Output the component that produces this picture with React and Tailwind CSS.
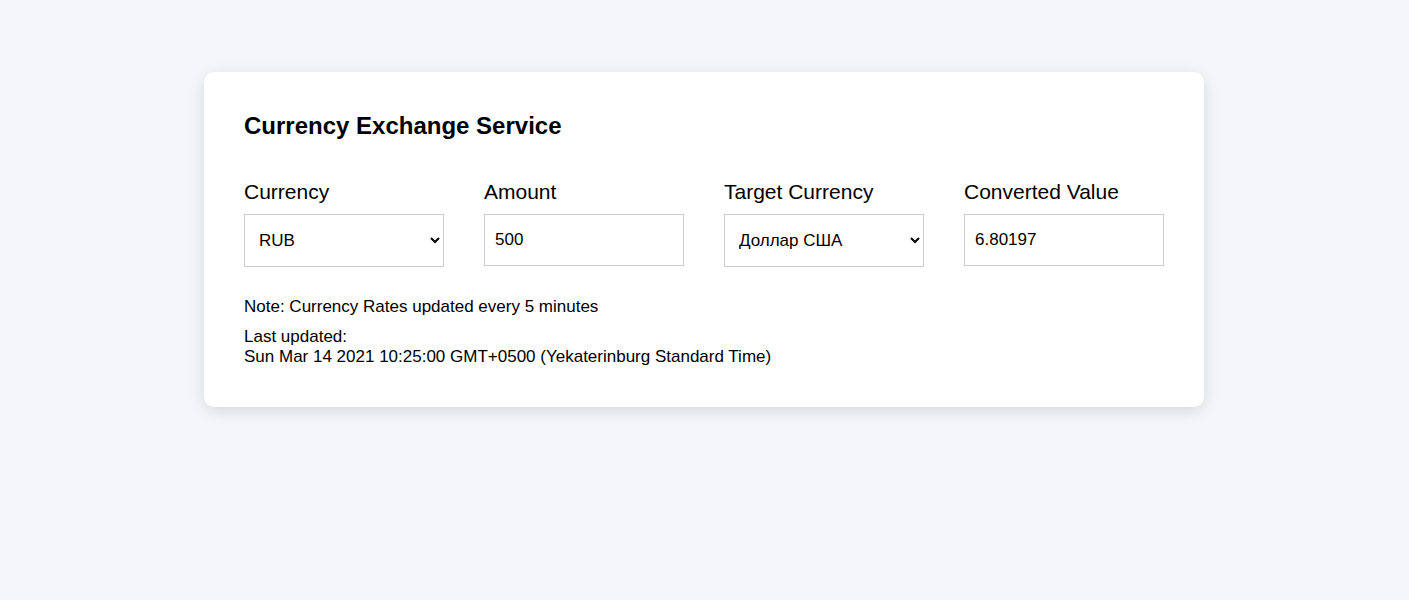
import React from "react";

export default function App() {
  const ff = { fontFamily: '"Liberation Sans", Arial, sans-serif' };
  return (
    <div className="min-h-[600px] w-full bg-[#f5f6fa] pt-[72px] pr-px" style={ff}>
      <div className="mx-auto w-[1000px] rounded-[10px] bg-white p-[40px] shadow-[0_4px_16px_rgba(0,0,0,0.12)] text-black">
        <h1 className="text-[24px] font-bold leading-[28px]">Currency Exchange Service</h1>
        <div className="mt-[40px] grid grid-cols-4 gap-[40px]">
          <div className="flex flex-col">
            <label className="text-[21px] leading-[24px] mb-[10px]">Currency</label>
            <select defaultValue="RUB" className="h-[53px] w-[200px] border border-[#cccccc] bg-white px-[10px] text-[17px] text-black outline-none" style={ff}>
              <option value="RUB">RUB</option>
              <option value="USD">USD</option>
            </select>
          </div>
          <div className="flex flex-col">
            <label className="text-[21px] leading-[24px] mb-[10px]">Amount</label>
            <input defaultValue="500" className="h-[52px] w-[200px] border border-[#cccccc] bg-white px-[10px] text-[17px] text-black outline-none" style={ff} />
          </div>
          <div className="flex flex-col">
            <label className="text-[21px] leading-[24px] mb-[10px]">Target Currency</label>
            <select defaultValue="USD" className="h-[53px] w-[200px] border border-[#cccccc] bg-white px-[10px] text-[17px] text-black outline-none" style={ff}>
              <option value="USD">Доллар США</option>
              <option value="EUR">Евро</option>
            </select>
          </div>
          <div className="flex flex-col">
            <label className="text-[21px] leading-[24px] mb-[10px]">Converted Value</label>
            <input defaultValue="6.80197" readOnly className="h-[52px] w-[200px] border border-[#cccccc] bg-white px-[10px] text-[17px] text-black outline-none" style={ff} />
          </div>
        </div>
        <p className="mt-[30px] text-[17px] leading-[20px]">Note: Currency Rates updated every 5 minutes</p>
        <p className="mt-[10px] text-[17px] leading-[20px]">
          Last updated:
          <br />
          Sun Mar 14 2021 10:25:00 GMT+0500 (Yekaterinburg Standard Time)
        </p>
      </div>
    </div>
  );
}
